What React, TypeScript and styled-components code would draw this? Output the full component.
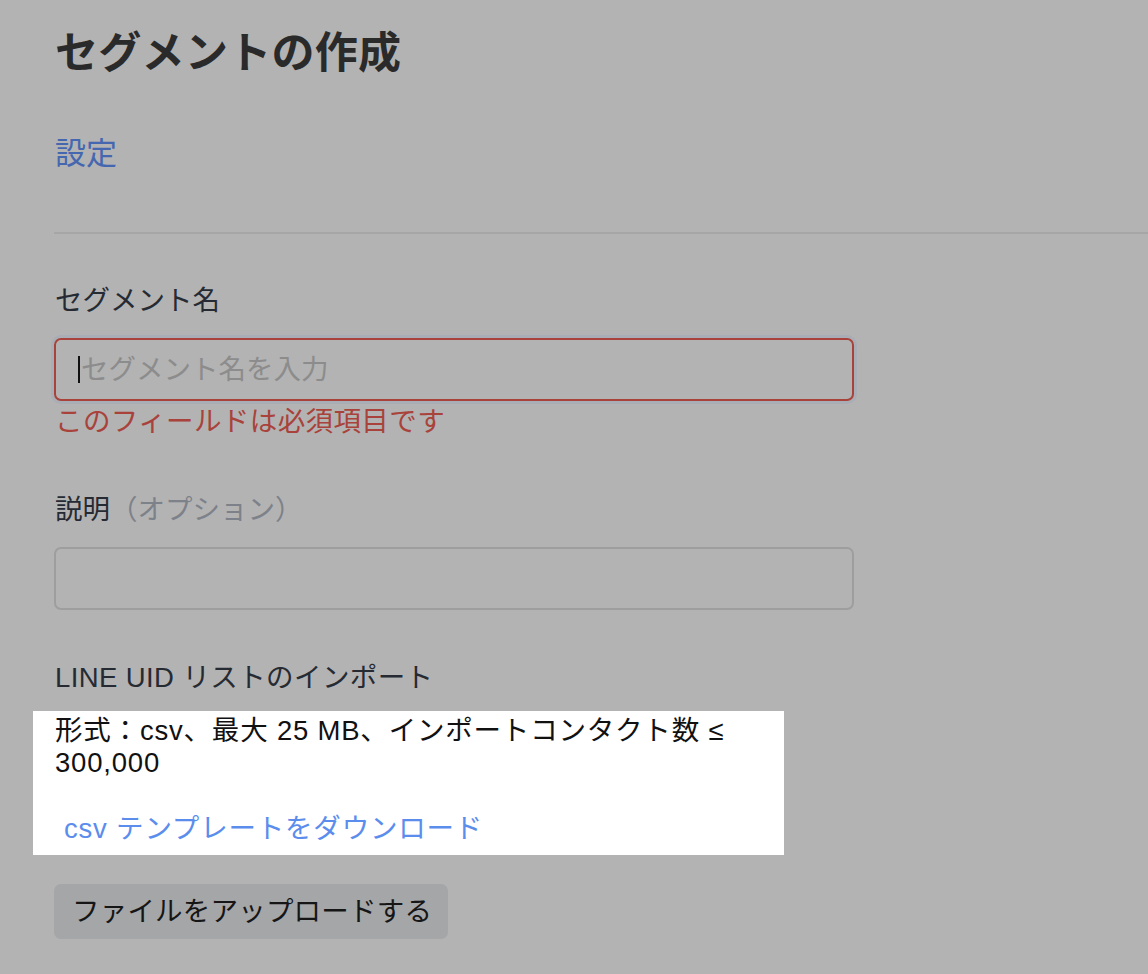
import React from "react";
import styled, { createGlobalStyle } from "styled-components";

const GlobalStyle = createGlobalStyle`
  html, body {
    margin: 0;
    padding: 0;
    background: #b3b3b3;
  }
  body {
    font-family: "Liberation Sans", "Noto Sans CJK JP", sans-serif;
    overflow: hidden;
  }
  * { box-sizing: border-box; }
`;

const Page = styled.div`
  padding-left: 54px;
  min-height: 974px;
  display: flex;
  flex-direction: column;
  align-items: flex-start;
`;

const Title = styled.h1`
  margin: 23px 0 0 1px;
  font-size: 43px;
  line-height: 60px;
  font-weight: 700;
  color: #2a2a2a;
  letter-spacing: 0.3px;
`;

const Tabs = styled.nav`
  align-self: stretch;
  margin-top: 51px;
  padding-bottom: 58px;
  border-bottom: 2px solid #a6a6a6;
`;

const TabLink = styled.span`
  display: inline-block;
  font-size: 31px;
  line-height: 40px;
  color: #4467b0;
  margin-left: 1px;
`;

const Label = styled.div<{ $gap: number; $spacing?: number }>`
  margin-top: ${(p) => p.$gap}px;
  margin-left: 1px;
  font-size: 27.5px;
  line-height: 36px;
  letter-spacing: ${(p) => p.$spacing ?? 0}px;
  color: #262b33;
`;

const Muted = styled.span`
  color: #7d8189;
`;

const Field = styled.div<{ $error?: boolean }>`
  margin-top: 19px;
  width: 800px;
  height: 63px;
  border-radius: 7px;
  border: 2px solid ${(p) => (p.$error ? "#a8423a" : "#9e9e9e")};
  box-shadow: ${(p) => (p.$error ? "0 0 0 3px #a9adb5" : "none")};
  display: flex;
  align-items: center;
  padding-left: 22px;
  font-size: 27.5px;
`;

const Caret = styled.span`
  width: 2px;
  height: 27px;
  background: #111;
  margin-right: 1px;
`;

const Placeholder = styled.span`
  color: #8c8c8c;
  line-height: 36px;
`;

const ErrorText = styled.div`
  margin-top: 3px;
  margin-left: 1px;
  font-size: 27.5px;
  line-height: 36px;
  letter-spacing: 0.4px;
  color: #a8423a;
`;

const Spotlight = styled.section`
  margin-top: 15px;
  margin-left: -21px;
  width: 751px;
  background: #ffffff;
  padding: 4px 22px 10px 22px;
`;

const FormatText = styled.p`
  margin: 0;
  font-size: 27.5px;
  line-height: 32px;
  letter-spacing: 0.8px;
  color: #111111;
`;

const DownloadLink = styled.span`
  display: inline-block;
  margin-top: 34px;
  margin-left: 9px;
  font-size: 27.5px;
  line-height: 32px;
  letter-spacing: 0.8px;
  color: #5b8ded;
`;

const UploadButton = styled.button`
  margin-top: 29px;
  height: 55px;
  padding: 0 16px 0 18px;
  border: none;
  border-radius: 7px;
  background: #a5a6a8;
  color: #161616;
  font-family: inherit;
  font-size: 27.5px;
  line-height: 36px;
  letter-spacing: 0.2px;
`;

export default function App() {
  return (
    <>
      <GlobalStyle />
      <Page>
        <Title>セグメントの作成</Title>
        <Tabs>
          <TabLink>設定</TabLink>
        </Tabs>

        <Label $gap={49}>セグメント名</Label>
        <Field $error>
          <Caret />
          <Placeholder>セグメント名を入力</Placeholder>
        </Field>
        <ErrorText>このフィールドは必須項目です</ErrorText>

        <Label $gap={52}>
          説明<Muted>（オプション）</Muted>
        </Label>
        <Field />

        <Label $gap={50} $spacing={0.4}>
          LINE UID リストのインポート
        </Label>
        <Spotlight>
          <FormatText>
            形式：csv、最大 25 MB、インポートコンタクト数 ≤ 300,000
          </FormatText>
          <DownloadLink>csv テンプレートをダウンロード</DownloadLink>
        </Spotlight>

        <UploadButton>ファイルをアップロードする</UploadButton>
      </Page>
    </>
  );
}
